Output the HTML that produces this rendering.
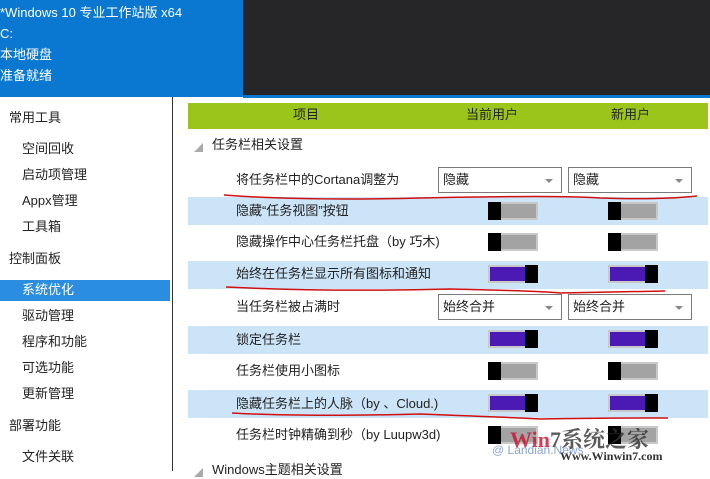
<!DOCTYPE html>
<html><head><meta charset="utf-8"><style>
*{margin:0;padding:0;box-sizing:border-box}
body{width:710px;height:471px;overflow:hidden;background:#fff;position:relative;font-family:"Liberation Sans","Noto Sans CJK SC",sans-serif;font-size:13px;color:#222}
.a{position:absolute;white-space:nowrap}
.t{line-height:16px}
.tw{color:#fff}
.tog{position:absolute;width:50px;height:18px;border:2px solid #c8c8c8}
.off{background:#a3a3a3}
.off::before{content:"";position:absolute;left:-2px;top:-2px;width:13px;height:18px;background:#000}
.on{background:#4b19b4}
.on::after{content:"";position:absolute;right:-2px;top:-2px;width:13px;height:18px;background:#000}
.dd{position:absolute;width:124px;height:26px;border:1px solid #7a7a7a;background:#fff;padding-left:4px;line-height:24px}
.dd::after{content:"";position:absolute;right:8px;top:11px;border-left:4px solid transparent;border-right:4px solid transparent;border-top:4px solid #888}
.blue{position:absolute;left:188px;width:520px;height:28px;background:#cce4f7}
</style></head><body>
<div class="a" style="left:0;top:0;width:243px;height:97px;background:#0a78d0"></div>
<div class="a" style="left:243px;top:0;width:467px;height:95px;background:#262628"></div>
<div class="a" style="left:243px;top:95px;width:467px;height:3px;background:#0a78d0"></div>
<div class="a t tw" style="left:0;top:5px">*Windows 10 专业工作站版 x64</div>
<div class="a t tw" style="left:0;top:26px">C:</div>
<div class="a t tw" style="left:0;top:47px">本地硬盘</div>
<div class="a t tw" style="left:0;top:68px">准备就绪</div>

<div class="a" style="left:172px;top:97px;width:1px;height:374px;background:#333"></div>
<div class="a" style="left:0;top:280px;width:170px;height:21px;background:#2b8de0"></div>
<div class="a t" style="left:9px;top:110px">常用工具</div>
<div class="a t" style="left:22px;top:141px">空间回收</div>
<div class="a t" style="left:22px;top:167px">启动项管理</div>
<div class="a t" style="left:22px;top:193px">Appx管理</div>
<div class="a t" style="left:22px;top:219px">工具箱</div>
<div class="a t" style="left:9px;top:251px">控制面板</div>
<div class="a t tw" style="left:22px;top:282px">系统优化</div>
<div class="a t" style="left:22px;top:308px">驱动管理</div>
<div class="a t" style="left:22px;top:334px">程序和功能</div>
<div class="a t" style="left:22px;top:360px">可选功能</div>
<div class="a t" style="left:22px;top:386px">更新管理</div>
<div class="a t" style="left:9px;top:418px">部署功能</div>
<div class="a t" style="left:22px;top:449px">文件关联</div>

<div class="a" style="left:188px;top:103px;width:520px;height:26px;background:#9cc51b"></div>
<div class="a t" style="left:293px;top:107px">项目</div>
<div class="a t" style="left:466px;top:107px">当前用户</div>
<div class="a t" style="left:611px;top:107px">新用户</div>
<div class="a" style="left:194px;top:141px;color:#aaa;font-size:9px">◢</div>
<div class="a t" style="left:212px;top:137px">任务栏相关设置</div>

<div class="blue" style="top:197px"></div>
<div class="blue" style="top:261px"></div>
<div class="blue" style="top:326px"></div>
<div class="blue" style="top:390px"></div>

<div class="a t" style="left:236px;top:172px">将任务栏中的Cortana调整为</div>
<div class="a t" style="left:236px;top:203px">隐藏“任务视图”按钮</div>
<div class="a t" style="left:236px;top:234px">隐藏操作中心任务栏托盘（by 巧木)</div>
<div class="a t" style="left:236px;top:266px">始终在任务栏显示所有图标和通知</div>
<div class="a t" style="left:236px;top:299px">当任务栏被占满时</div>
<div class="a t" style="left:236px;top:332px">锁定任务栏</div>
<div class="a t" style="left:236px;top:363px">任务栏使用小图标</div>
<div class="a t" style="left:236px;top:396px">隐藏任务栏上的人脉（by 、Cloud.)</div>
<div class="a t" style="left:236px;top:427px">任务栏时钟精确到秒（by Luupw3d)</div>
<div class="a" style="left:194px;top:466px;color:#aaa;font-size:9px">◢</div>
<div class="a t" style="left:212px;top:462px">Windows主题相关设置</div>

<div class="dd" style="left:438px;top:167px">隐藏</div>
<div class="dd" style="left:568px;top:167px">隐藏</div>
<div class="dd" style="left:438px;top:294px">始终合并</div>
<div class="dd" style="left:568px;top:294px">始终合并</div>

<div class="tog off" style="left:488px;top:202px"></div><div class="tog off" style="left:608px;top:202px"></div>
<div class="tog off" style="left:488px;top:233px"></div><div class="tog off" style="left:608px;top:233px"></div>
<div class="tog on" style="left:488px;top:265px"></div><div class="tog on" style="left:608px;top:265px"></div>
<div class="tog on" style="left:488px;top:330px"></div><div class="tog on" style="left:608px;top:330px"></div>
<div class="tog off" style="left:488px;top:362px"></div><div class="tog off" style="left:608px;top:362px"></div>
<div class="tog on" style="left:488px;top:394px"></div><div class="tog on" style="left:608px;top:394px"></div>
<div class="tog off" style="left:488px;top:426px"></div><div class="tog off" style="left:608px;top:426px"></div>

<svg class="a" style="left:0;top:0" width="710" height="471">
<g fill="none" stroke="#d01010" stroke-width="1.5">
<path d="M224 195 Q300 201 420 198 Q560 195 600 198 Q660 200 697 196"/>
<path d="M226 287 Q330 292 450 289 Q540 291 560 293 Q620 292 665 291"/>
<path d="M232 413 Q300 417 420 414 Q500 417 540 419 Q600 418 668 418"/>
</g></svg>
<div class="a" style="left:510px;top:423px;color:#c8102e;font:bold 22px 'Liberation Serif','Noto Serif CJK SC',serif;opacity:.8">Win<span style="color:#333">7系统之家</span></div>
<div class="a" style="left:560px;top:449px;color:#333;font:bold 12px 'Liberation Serif',serif">Www.Winwin7.com</div>
<div class="a" style="left:492px;top:443px;color:#5a7fc0;font-size:12px;opacity:.7">@ Landian.News</div>
</body></html>
